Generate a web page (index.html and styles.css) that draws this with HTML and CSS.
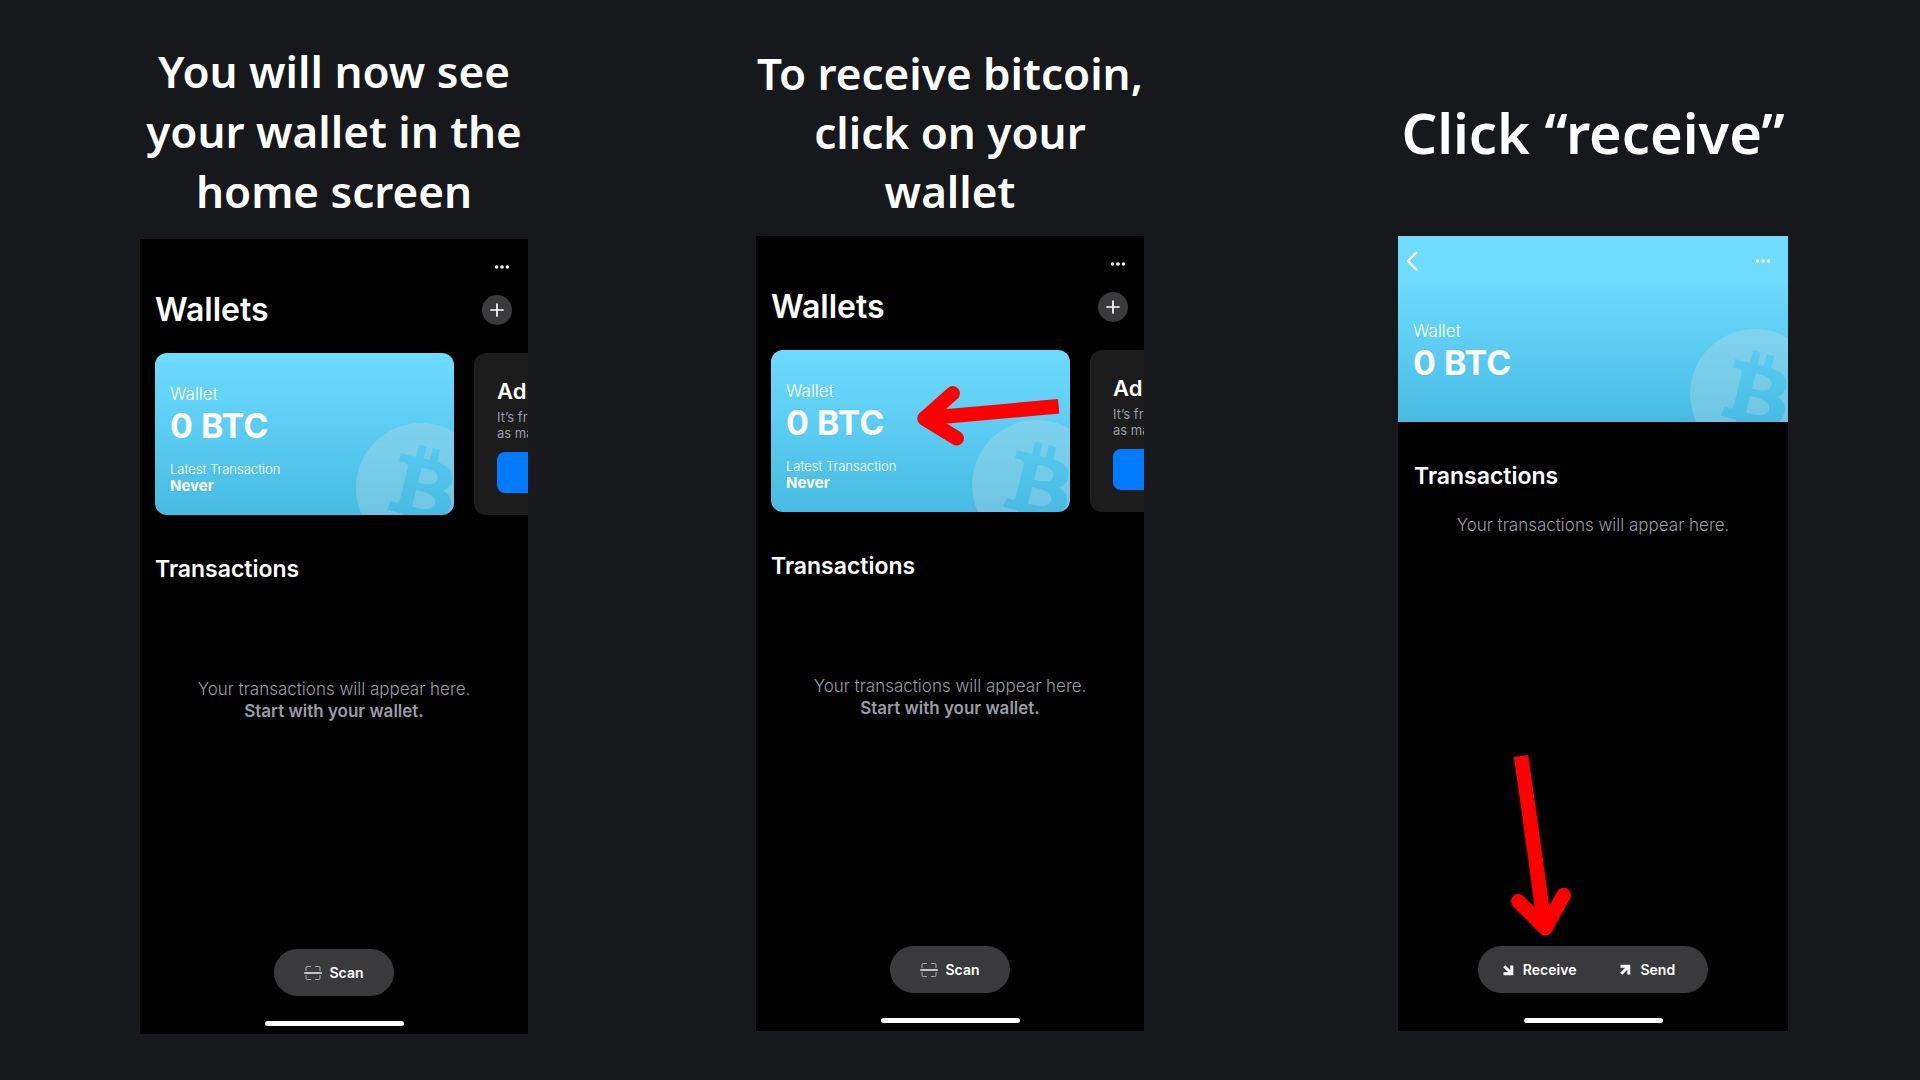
FILE: index.html
```html
<!DOCTYPE html>
<html lang="en">
<head>
<meta charset="utf-8">
<meta name="viewport" content="width=device-width, initial-scale=1">
<title>Receive bitcoin</title>
<link rel="stylesheet" href="styles.css">
</head>
<body>
<svg class="symbols" aria-hidden="true">
  <symbol id="dots" viewBox="0 0 16 6">
    <circle cx="2.6" cy="3" r="1.8"/><circle cx="8" cy="3" r="1.8"/><circle cx="13.4" cy="3" r="1.8"/>
  </symbol>
  <symbol id="plus" viewBox="0 0 14 14">
    <path d="M7 1v12M1 7h12" fill="none" stroke="currentColor" stroke-width="1.7" stroke-linecap="round"/>
  </symbol>
  <symbol id="scan" viewBox="0 0 18 16">
    <path d="M2 6V3a1.5 1.5 0 0 1 1.500-1.500H7M11 1.500h3.500A1.500 1.500 0 0 1 16 3v3M16 10v3a1.500 1.500 0 0 1-1.500 1.500H11M7 14.500H3.500A1.500 1.500 0 0 1 2 13v-3" fill="none" stroke="#a4a4a6" stroke-width="1.100"/>
    <path d="M.7 8h16.600" stroke="#f2f2f2" stroke-width="1.300" stroke-linecap="round"/>
  </symbol>
  <symbol id="bitcoin" viewBox="0 0 32 32">
    <defs>
      <mask id="coin">
        <circle cx="16" cy="16" r="16" fill="#fff"/>
        <path transform="translate(16 16) scale(1.07) translate(-16 -16)" fill="#000" d="M23.189 14.02c.314-2.096-1.283-3.223-3.465-3.975l.708-2.840-1.728-.430-.690 2.765c-.454-.114-.920-.220-1.385-.326l.695-2.783L15.596 6l-.708 2.839c-.376-.086-.746-.170-1.104-.260l.002-.009-2.384-.595-.460 1.846s1.283.294 1.256.312c.700.175.826.638.805 1.006l-.806 3.235c.048.012.110.030.180.057l-.183-.045-1.130 4.532c-.086.212-.303.531-.793.410.018.025-1.256-.313-1.256-.313l-.858 1.978 2.250.561c.418.105.828.215 1.231.318l-.715 2.872 1.727.430.708-2.840c.472.127.930.245 1.378.357l-.706 2.828 1.728.430.715-2.866c2.948.558 5.164.333 6.097-2.333.752-2.146-.037-3.385-1.588-4.192 1.130-.260 1.980-1.003 2.207-2.538zm-3.950 5.538c-.533 2.147-4.148.986-5.320.695l.950-3.805c1.172.293 4.929.872 4.370 3.110zm.535-5.569c-.487 1.953-3.495.960-4.470.717l.860-3.450c.975.243 4.118.696 3.610 2.733z"/>
      </mask>
    </defs>
    <rect width="32" height="32" fill="#d3dfe3" fill-opacity=".28" mask="url(#coin)"/>
  </symbol>
  <symbol id="arrow-out" viewBox="0 0 12 12">
    <path d="M1.500 2.200H9.800V10.500M9.500 2.500L2.300 9.700" fill="none" stroke="currentColor" stroke-width="3"/>
  </symbol>
</svg>

<main class="steps">
  <section class="step step-home">
    <h2 class="caption">You will now see<br>your wallet in the<br>home screen</h2>
    <div class="phone">
      <div class="topbar">
        <button class="icon-button" aria-label="More"><svg class="dots"><use href="#dots"/></svg></button>
      </div>
      <div class="title-row">
        <h3 class="title">Wallets</h3>
        <button class="add" aria-label="Add wallet"><svg class="plus"><use href="#plus"/></svg></button>
      </div>
      <div class="cards">
        <a class="card" href="#">
          <span class="wallet-name">Wallet</span>
          <strong class="balance">0 BTC</strong>
          <span class="latest">Latest Transaction</span>
          <strong class="when">Never</strong>
          <svg class="coin"><use href="#bitcoin"/></svg>
        </a>
        <div class="promo">
          <h4 class="promo-title">Ad</h4>
          <p class="promo-text">It’s fr<br>as ma</p>
          <button class="promo-button" aria-label="Add"></button>
        </div>
      </div>
      <h4 class="section-title">Transactions</h4>
      <p class="empty">Your transactions will appear here.<br><strong>Start with your wallet.</strong></p>
      <div class="dock">
        <button class="pill scan-pill"><svg class="scan"><use href="#scan"/></svg>Scan</button>
        <div class="home-bar"></div>
      </div>
    </div>
  </section>

  <section class="step step-select">
    <h2 class="caption">To receive bitcoin,<br>click on your<br>wallet</h2>
    <div class="phone">
      <div class="topbar">
        <button class="icon-button" aria-label="More"><svg class="dots"><use href="#dots"/></svg></button>
      </div>
      <div class="title-row">
        <h3 class="title">Wallets</h3>
        <button class="add" aria-label="Add wallet"><svg class="plus"><use href="#plus"/></svg></button>
      </div>
      <div class="cards">
        <a class="card" href="#">
          <span class="wallet-name">Wallet</span>
          <strong class="balance">0 BTC</strong>
          <span class="latest">Latest Transaction</span>
          <strong class="when">Never</strong>
          <svg class="coin"><use href="#bitcoin"/></svg>
        </a>
        <div class="promo">
          <h4 class="promo-title">Ad</h4>
          <p class="promo-text">It’s fr<br>as ma</p>
          <button class="promo-button" aria-label="Add"></button>
        </div>
      </div>
      <h4 class="section-title">Transactions</h4>
      <p class="empty">Your transactions will appear here.<br><strong>Start with your wallet.</strong></p>
      <div class="dock">
        <button class="pill scan-pill"><svg class="scan"><use href="#scan"/></svg>Scan</button>
        <div class="home-bar"></div>
      </div>
      <svg class="pointer pointer-card" viewBox="0 0 150 64" aria-hidden="true">
        <path class="shaft" d="M142.700 21.300L12 33"/>
        <path class="head" d="M36.700 8.300L8.500 33.500L40.700 53.300"/>
      </svg>
    </div>
  </section>

  <section class="step step-receive">
    <h2 class="caption">Click “receive”</h2>
    <div class="phone">
      <header class="wallet-header">
        <div class="wallet-nav">
          <button class="icon-button" aria-label="Back">
            <svg class="back" viewBox="0 0 12 20"><path d="M10.400 1.400L1.800 10l8.600 8.600" fill="none" stroke="currentColor" stroke-width="2.400" stroke-linecap="round" stroke-linejoin="round"/></svg>
          </button>
          <button class="icon-button" aria-label="More"><svg class="dots"><use href="#dots"/></svg></button>
        </div>
        <span class="wallet-name">Wallet</span>
        <strong class="balance">0 BTC</strong>
        <svg class="coin"><use href="#bitcoin"/></svg>
      </header>
      <h4 class="section-title">Transactions</h4>
      <p class="empty">Your transactions will appear here.</p>
      <div class="dock">
        <div class="pill actions">
          <button class="action"><svg class="arrow arrow-in"><use href="#arrow-out"/></svg>Receive</button>
          <button class="action"><svg class="arrow"><use href="#arrow-out"/></svg>Send</button>
        </div>
        <div class="home-bar"></div>
      </div>
      <svg class="pointer pointer-receive" viewBox="0 0 64 186" aria-hidden="true">
        <path class="shaft" d="M11 6Q24 96 34 172"/>
        <path class="head" d="M8.300 151.300L35.300 178.300L53.700 145"/>
      </svg>
    </div>
  </section>
</main>
</body>
</html>
```
FILE: styles.css
```css
* {
  box-sizing: border-box;
}

body {
  margin: 0;
  min-height: 100vh;
  background: #17181c;
  color: #fff;
  font-family: Inter, "Liberation Sans", sans-serif;
}

h2, h3, h4, p {
  margin: 0;
}

button {
  padding: 0;
  border: 0;
  background: none;
  color: inherit;
  font: inherit;
  cursor: pointer;
}

svg {
  display: block;
  fill: currentColor;
}

.symbols {
  position: absolute;
  width: 0;
  height: 0;
}

/* Phones with uneven gutters between them */
.steps {
  display: grid;
  grid-template-columns: minmax(0, 388fr) 228fr minmax(0, 388fr) 254fr minmax(0, 390fr);
  padding: 0 132px 46px 140px;
}

.step {
  display: flex;
  flex-direction: column;
}

.step-home { grid-column: 1; }
.step-select { grid-column: 3; }
.step-receive { grid-column: 5; }

.caption {
  font: 600 44px/60px "Noto Sans", sans-serif;
  text-align: center;
  white-space: nowrap;
}

.step-home .caption {
  padding: 41px 0 18px;
}

.step-select .caption {
  padding: 44px 0 15px;
  line-height: 59px;
}

.step-receive .caption {
  padding: 96px 0 68px;
  font-size: 56px;
  line-height: 72px;
}

.phone {
  position: relative;
  display: flex;
  flex-direction: column;
  min-height: 795px;
  overflow: hidden;
  background: #000;
}

.topbar {
  display: flex;
  justify-content: flex-end;
  padding: 20px 18px 0 0;
}

.icon-button {
  display: flex;
  align-items: center;
  height: 16px;
}

.dots {
  width: 16px;
  height: 6px;
}

.title-row {
  display: flex;
  justify-content: space-between;
  align-items: center;
  padding: 20px 16px 28px 15px;
}

.title {
  font-size: 32px;
  line-height: 30px;
  font-weight: 600;
}

.add {
  display: grid;
  place-items: center;
  width: 30px;
  height: 30px;
  border-radius: 50%;
  background: #3a3a3c;
}

.plus {
  width: 14px;
  height: 14px;
}

.cards {
  display: flex;
  gap: 20px;
  padding-left: 15px;
}

.card,
.promo {
  flex: 0 0 299px;
  display: flex;
  flex-direction: column;
  align-items: flex-start;
  height: 162px;
  border-radius: 12px;
}

.card {
  position: relative;
  overflow: hidden;
  padding: 29px 15px 0;
  background: linear-gradient(#6edbff, #47bbe3);
  color: #fff;
  text-decoration: none;
}

.wallet-name {
  font-size: 17px;
  line-height: 24px;
  font-weight: 300;
}

.balance {
  font-size: 34px;
  line-height: 40px;
  font-weight: 700;
}

.latest {
  margin-top: 15px;
  font-size: 13px;
  line-height: 16px;
  font-weight: 300;
}

.when {
  font-size: 15px;
  line-height: 18px;
}

.coin {
  position: absolute;
  width: 130px;
  height: 130px;
}

.card .coin {
  top: 70px;
  right: -32px;
}

.promo {
  padding: 25px 23px 0;
  background: #1c1c1c;
}

.promo-title {
  font-size: 22px;
  line-height: 26px;
  font-weight: 600;
}

.promo-text {
  margin-top: 5px;
  color: #9a9ba5;
  font-size: 13px;
  line-height: 16px;
}

.promo-button {
  width: 100%;
  height: 41px;
  margin-top: 11px;
  border-radius: 8px;
  background: #007aff;
}

.section-title {
  padding: 40px 15px 0;
  font-size: 23px;
  line-height: 28px;
  font-weight: 600;
}

.empty {
  padding-top: 95px;
  color: #9a9ba5;
  font-size: 17px;
  line-height: 22px;
  font-weight: 300;
  text-align: center;
}

.empty strong {
  font-weight: 600;
}

.dock {
  display: flex;
  flex-direction: column;
  align-items: center;
  gap: 25px;
  margin-top: auto;
  padding-bottom: 8px;
}

.pill {
  display: flex;
  align-items: center;
  height: 47px;
  border-radius: 24px;
  background: #3a3a3c;
  font-size: 14px;
  line-height: 20px;
  font-weight: 600;
}

.scan-pill {
  gap: 7px;
  padding: 0 30px;
}

.scan {
  width: 18px;
  height: 16px;
}

.home-bar {
  width: 139px;
  height: 5px;
  border-radius: 3px;
  background: #fff;
}

.wallet-header {
  position: relative;
  display: flex;
  flex-direction: column;
  height: 186px;
  overflow: hidden;
  padding: 0 15px;
  background: linear-gradient(#6edbff 24%, #47bbe3);
}

.wallet-nav {
  display: flex;
  justify-content: space-between;
  margin: 0 2px 0 -7px;
  padding: 17px 0 50px;
}

.back {
  width: 12px;
  height: 20px;
}

.wallet-header .coin {
  top: 93px;
  right: -32px;
}

.step-receive .section-title {
  padding: 40px 16px 0;
}

.step-receive .empty {
  padding-top: 24px;
}

.actions {
  gap: 43px;
  padding: 0 33px 0 24px;
}

.action {
  display: flex;
  align-items: center;
  gap: 9px;
}

.arrow {
  width: 12px;
  height: 12px;
}

.arrow-in {
  transform: rotate(90deg);
}

/* Annotation arrows drawn over the screens */
.pointer {
  position: absolute;
  fill: none;
  stroke: #f00;
  stroke-width: 14.5;
  pointer-events: none;
}

.head {
  stroke-linecap: round;
  stroke-linejoin: round;
}

.pointer-card {
  top: 149px;
  left: 160px;
  width: 150px;
  height: 64px;
}

.pointer-receive {
  top: 514px;
  left: 112px;
  width: 64px;
  height: 186px;
}

@media (max-width: 1400px) {
  .steps {
    grid-template-columns: minmax(0, 390px);
    justify-content: center;
    padding: 0 16px 40px;
  }

  .step {
    grid-column: 1;
  }
}
```
